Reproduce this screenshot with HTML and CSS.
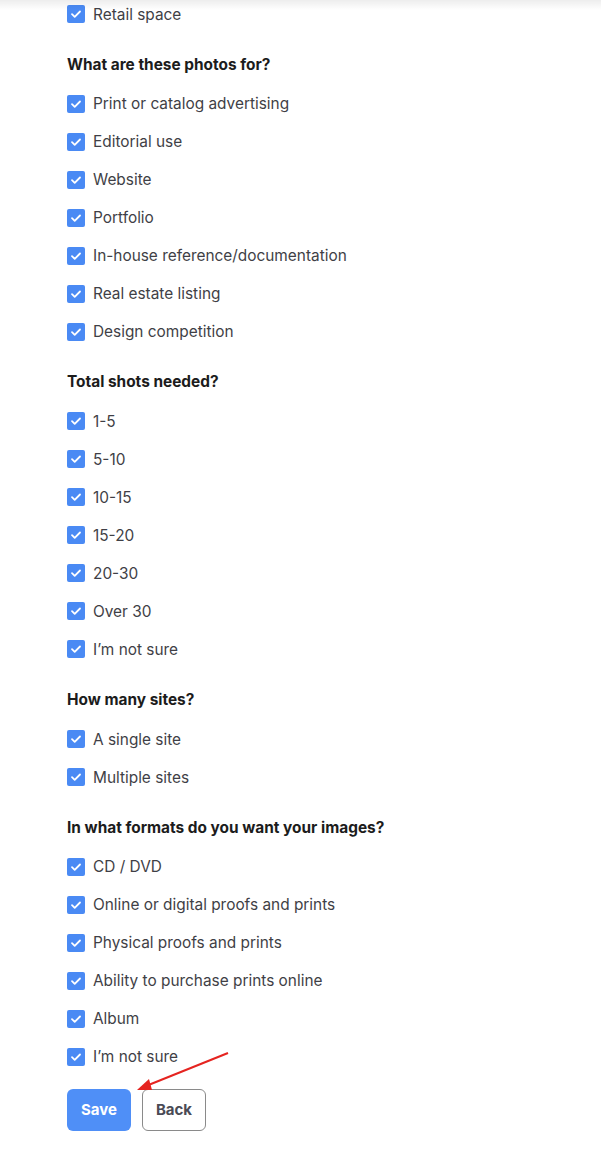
FILE: index.html
```html
<!DOCTYPE html>
<html>
<head>
<meta charset="utf-8">
<link rel="stylesheet" href="styles.css">
</head>
<body>
<div class="topshade"></div>
<main class="form">
  <ul class="group first">
    <li class="opt"><span class="cb"><svg viewBox="0 0 18 18"><path d="M5 9.2l2.7 2.6L13 6.5"/></svg></span>Retail space</li>
  </ul>

  <h3 class="q">What are these photos for?</h3>
  <ul class="group">
    <li class="opt"><span class="cb"><svg viewBox="0 0 18 18"><path d="M5 9.2l2.7 2.6L13 6.5"/></svg></span>Print or catalog advertising</li>
    <li class="opt"><span class="cb"><svg viewBox="0 0 18 18"><path d="M5 9.2l2.7 2.6L13 6.5"/></svg></span>Editorial use</li>
    <li class="opt"><span class="cb"><svg viewBox="0 0 18 18"><path d="M5 9.2l2.7 2.6L13 6.5"/></svg></span>Website</li>
    <li class="opt"><span class="cb"><svg viewBox="0 0 18 18"><path d="M5 9.2l2.7 2.6L13 6.5"/></svg></span>Portfolio</li>
    <li class="opt"><span class="cb"><svg viewBox="0 0 18 18"><path d="M5 9.2l2.7 2.6L13 6.5"/></svg></span>In-house reference/documentation</li>
    <li class="opt"><span class="cb"><svg viewBox="0 0 18 18"><path d="M5 9.2l2.7 2.6L13 6.5"/></svg></span>Real estate listing</li>
    <li class="opt"><span class="cb"><svg viewBox="0 0 18 18"><path d="M5 9.2l2.7 2.6L13 6.5"/></svg></span>Design competition</li>
  </ul>

  <h3 class="q">Total shots needed?</h3>
  <ul class="group">
    <li class="opt"><span class="cb"><svg viewBox="0 0 18 18"><path d="M5 9.2l2.7 2.6L13 6.5"/></svg></span>1-5</li>
    <li class="opt"><span class="cb"><svg viewBox="0 0 18 18"><path d="M5 9.2l2.7 2.6L13 6.5"/></svg></span>5-10</li>
    <li class="opt"><span class="cb"><svg viewBox="0 0 18 18"><path d="M5 9.2l2.7 2.6L13 6.5"/></svg></span>10-15</li>
    <li class="opt"><span class="cb"><svg viewBox="0 0 18 18"><path d="M5 9.2l2.7 2.6L13 6.5"/></svg></span>15-20</li>
    <li class="opt"><span class="cb"><svg viewBox="0 0 18 18"><path d="M5 9.2l2.7 2.6L13 6.5"/></svg></span>20-30</li>
    <li class="opt"><span class="cb"><svg viewBox="0 0 18 18"><path d="M5 9.2l2.7 2.6L13 6.5"/></svg></span>Over 30</li>
    <li class="opt"><span class="cb"><svg viewBox="0 0 18 18"><path d="M5 9.2l2.7 2.6L13 6.5"/></svg></span>I’m not sure</li>
  </ul>

  <h3 class="q">How many sites?</h3>
  <ul class="group">
    <li class="opt"><span class="cb"><svg viewBox="0 0 18 18"><path d="M5 9.2l2.7 2.6L13 6.5"/></svg></span>A single site</li>
    <li class="opt"><span class="cb"><svg viewBox="0 0 18 18"><path d="M5 9.2l2.7 2.6L13 6.5"/></svg></span>Multiple sites</li>
  </ul>

  <h3 class="q">In what formats do you want your images?</h3>
  <ul class="group">
    <li class="opt"><span class="cb"><svg viewBox="0 0 18 18"><path d="M5 9.2l2.7 2.6L13 6.5"/></svg></span>CD / DVD</li>
    <li class="opt"><span class="cb"><svg viewBox="0 0 18 18"><path d="M5 9.2l2.7 2.6L13 6.5"/></svg></span>Online or digital proofs and prints</li>
    <li class="opt"><span class="cb"><svg viewBox="0 0 18 18"><path d="M5 9.2l2.7 2.6L13 6.5"/></svg></span>Physical proofs and prints</li>
    <li class="opt"><span class="cb"><svg viewBox="0 0 18 18"><path d="M5 9.2l2.7 2.6L13 6.5"/></svg></span>Ability to purchase prints online</li>
    <li class="opt"><span class="cb"><svg viewBox="0 0 18 18"><path d="M5 9.2l2.7 2.6L13 6.5"/></svg></span>Album</li>
    <li class="opt"><span class="cb"><svg viewBox="0 0 18 18"><path d="M5 9.2l2.7 2.6L13 6.5"/></svg></span>I’m not sure</li>
  </ul>

  <div class="actions">
    <button class="btn save">Save</button>
    <button class="btn back">Back</button>
  </div>
</main>
<svg class="arrow" width="601" height="1149" viewBox="0 0 601 1149">
  <line x1="228" y1="1053" x2="146" y2="1086" />
  <path d="M137 1090 L149 1079 L152 1090 Z" />
</svg>
</body>
</html>
```

FILE: styles.css
```css
html, body {
  margin: 0;
  padding: 0;
  background: #ffffff;
}
body {
  font-family: Inter, Lato, Arial, sans-serif;
  color: #3d3d3d;
  position: relative;
  min-height: 1149px;
}
.topshade {
  position: absolute;
  left: 0;
  top: 0;
  width: 100%;
  height: 10px;
  background: linear-gradient(to bottom, rgba(0,0,0,0.07), rgba(0,0,0,0));
  pointer-events: none;
}
.form {
  padding-left: 67px;
}
.group {
  list-style: none;
  margin: 0;
  padding: 0;
}
.group.first {
  margin-top: -5px;
}
.opt {
  height: 38px;
  display: flex;
  align-items: center;
  gap: 8px;
  font-size: 15.4px;
  color: #3f3f46;
}
.cb {
  width: 18px;
  height: 18px;
  border-radius: 2px;
  background: #4a8af4;
  display: flex;
  flex: none;
}
.cb svg {
  width: 18px;
  height: 18px;
}
.cb path {
  fill: none;
  stroke: #ffffff;
  stroke-width: 1.8;
  stroke-linecap: round;
  stroke-linejoin: round;
}
.q {
  margin: 21.7px 0 10px;
  height: 20px;
  line-height: 20px;
  font-size: 15.4px;
  font-weight: 700;
  color: #1c1c1c;
}
.actions {
  display: flex;
  gap: 11px;
  margin-top: 13px;
}
.btn {
  width: 64px;
  height: 42px;
  border-radius: 6px;
  font-family: Inter, Lato, Arial, sans-serif;
  font-size: 15px;
  font-weight: 700;
  cursor: pointer;
}
.save {
  background: #4f8ff7;
  color: #ffffff;
  border: none;
}
.back {
  background: #ffffff;
  color: #4a4a55;
  border: 1px solid #8a8a8a;
}
.arrow {
  position: absolute;
  left: 0;
  top: 0;
  pointer-events: none;
}
.arrow line {
  stroke: #e52420;
  stroke-width: 2;
}
.arrow path {
  fill: #e52420;
}
```
